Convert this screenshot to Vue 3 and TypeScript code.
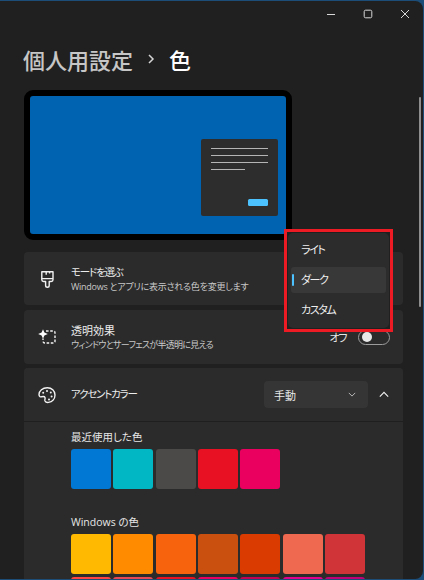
<script setup lang="ts">
const recent: string[] = ['#0078d4', '#00b7c3', '#4c4a48', '#e81123', '#ea005e']
const windowsColors: string[] = [
  '#ffb900', '#ff8c00', '#f7630c', '#ca5010', '#da3b01', '#ef6950', '#d13438',
  '#ff4343', '#e74856', '#e81123', '#ea005e', '#c30052', '#e3008c', '#bf0077',
]
const modes: { label: string; active: boolean }[] = [
  { label: 'ライト', active: false },
  { label: 'ダーク', active: true },
  { label: 'カスタム', active: false },
]
</script>

<template>
  <div class="screen">
    <div class="window">
      <header class="titlebar">
        <svg class="ctl ctl-min" viewBox="0 0 10 10" width="10" height="10"><path d="M1 5.5H9" /></svg>
        <svg class="ctl ctl-max" viewBox="0 0 10 10" width="10" height="10"><rect x="1.2" y="1.2" width="7.6" height="7.6" rx="1.4" /></svg>
        <svg class="ctl ctl-close" viewBox="0 0 10 10" width="10" height="10"><path d="M1 1L9 9M9 1L1 9" /></svg>
      </header>

      <main class="content">
        <h1 class="heading">
          <span class="crumb">個人用設定</span>
          <svg class="crumb-sep" viewBox="0 0 8 10" width="8" height="10"><path d="M2 1L6 5L2 9" /></svg>
          <span class="current">色</span>
        </h1>

        <div class="preview">
          <div class="mini">
            <span class="mini-line"></span>
            <span class="mini-line"></span>
            <span class="mini-line"></span>
            <span class="mini-line short"></span>
            <span class="mini-btn"></span>
          </div>
        </div>

        <section class="card">
          <svg class="icon" viewBox="0 0 20 20" width="20" height="20">
            <path d="M4.8 2.8H16V10.8C16 11.8 15.2 12.5 14.2 12.5H12.2V16.4C12.2 17.5 11.4 18.2 10.4 18.2C9.4 18.2 8.6 17.5 8.6 16.4V12.5H6.6C5.6 12.5 4.8 11.8 4.8 10.8Z" />
            <path d="M4.8 9.6H16M9.2 2.8V5.8M12.6 2.8V4.6" />
          </svg>
          <div class="texts">
            <div class="title tight">モードを選ぶ</div>
            <div class="sub sub-a">Windows とアプリに表示される色を変更します</div>
          </div>
        </section>

        <section class="card card-tall">
          <svg class="icon" viewBox="0 0 20 20" width="20" height="20">
            <path class="dash" d="M9 4H16.2C17.3 4 18 4.7 18 5.8V14.2C18 15.3 17.3 16 16.2 16H7.8C6.7 16 6 15.3 6 14.2V11.5" />
            <path class="solid" d="M6 2.2L7.4 5.6L10.8 7L7.4 8.4L6 11.8L4.6 8.4L1.2 7L4.6 5.6Z" />
          </svg>
          <div class="texts">
            <div class="title">透明効果</div>
            <div class="sub sub-b">ウィンドウとサーフェスが半透明に見える</div>
          </div>
          <div class="toggle-wrap">
            <span class="toggle-label">オフ</span>
            <span class="toggle"><span class="knob"></span></span>
          </div>
        </section>

        <section class="panel">
          <div class="panel-head">
            <svg class="icon" viewBox="0 0 20 20" width="20" height="20">
              <path d="M10.3 2.8C5.6 2.8 2 5.8 2 9.6C2 11.4 3.2 12.2 4.7 11.8C6.2 11.4 7.5 11.4 8 12.5C8.5 13.7 7.4 14.7 8 16C8.6 17.2 10 17.6 11.5 17.4C15.3 16.9 18 14 18 10.1C18 5.8 14.7 2.8 10.3 2.8Z" />
              <circle class="dot" cx="6.2" cy="7.8" r="1" />
              <circle class="dot" cx="10" cy="5.9" r="1" />
              <circle class="dot" cx="13.8" cy="7.6" r="1" />
              <circle class="dot" cx="14.6" cy="11.4" r="1" />
              <circle class="dot" cx="12" cy="14.4" r="1" />
            </svg>
            <div class="title tight texts">アクセントカラー</div>
            <div class="select">
              <span>手動</span>
              <svg class="select-chev" viewBox="0 0 10 6" width="8" height="5"><path d="M1 1L5 5L9 1" /></svg>
            </div>
            <svg class="collapse" viewBox="0 0 12 8" width="10" height="7"><path d="M1 6.5L6 1.5L11 6.5" /></svg>
          </div>
          <div class="panel-body">
            <div class="label">最近使用した色</div>
            <div class="swatches">
              <span v-for="c in recent" :key="c" class="swatch" :style="{ background: c }"></span>
            </div>
            <div class="label second">Windows の色</div>
            <div class="swatches">
              <span v-for="c in windowsColors" :key="c" class="swatch" :style="{ background: c }"></span>
            </div>
          </div>
        </section>
      </main>

      <div class="scrollbar"></div>
    </div>

    <div class="highlight">
      <ul class="menu">
        <li v-for="m in modes" :key="m.label" class="menu-item" :class="{ active: m.active }">{{ m.label }}</li>
      </ul>
    </div>
  </div>
</template>

<style scoped>
.screen {
  position: relative;
  width: 424px;
  height: 580px;
  box-sizing: border-box;
  padding: 1px 1px 1px 0;
  background: #1b4d78;
  overflow: hidden;
  font-family: "Open Sans", "Noto Sans CJK JP", sans-serif;
  font-feature-settings: "palt";
  color: #f2f2f2;
}
.window {
  position: relative;
  height: 100%;
  display: flex;
  flex-direction: column;
  background: #202020;
  border-radius: 0 8px 8px 0;
  overflow: hidden;
}
.titlebar {
  flex: none;
  height: 26px;
  display: flex;
  align-items: center;
  justify-content: flex-end;
  padding-right: 13px;
  gap: 27px;
}
.ctl { fill: none; stroke: #d8d8d8; stroke-width: 1; }
.content {
  flex: 1;
  min-height: 0;
  display: flex;
  flex-direction: column;
  padding: 17px 20px 0 24px;
}
.heading {
  flex: none;
  margin: 0 0 16px -1px;
  height: 30px;
  display: flex;
  align-items: center;
  font-size: 22px;
  font-weight: 500;
  font-feature-settings: normal;
}
.crumb { color: #c6c6c6; width: 111px; }
.crumb-sep { margin-left: 13px; fill: none; stroke: #d4d4d4; stroke-width: 1.5; }
.current { margin-left: 14px; color: #fff; }
.preview {
  flex: none;
  box-sizing: border-box;
  width: 268px;
  height: 150px;
  border: 6px solid #000;
  border-radius: 9px;
  background: #0063b1;
  display: flex;
  justify-content: flex-end;
  align-items: flex-end;
  padding: 0 8px 18px 0;
  margin-bottom: 12px;
}
.mini {
  position: relative;
  box-sizing: border-box;
  width: 77px;
  height: 77px;
  border-radius: 2px;
  background: #2d2d2d;
  padding: 9px 10px;
  display: flex;
  flex-direction: column;
  gap: 6px;
}
.mini-line { height: 1px; background: #b5b5b5; }
.mini-line.short { width: 34px; }
.mini-btn {
  margin-top: auto;
  margin-bottom: 1px;
  align-self: flex-end;
  width: 20px;
  height: 7px;
  border-radius: 1.5px;
  background: #4cc2ff;
}
.card, .panel-head {
  flex: none;
  display: flex;
  align-items: center;
  background: #2b2b2b;
  padding: 0 13px 0 15px;
}
.card {
  height: 53px;
  margin-bottom: 5px;
  border-radius: 4px;
}
.card-tall {
  height: 54px;
  margin-bottom: 4px;
}
.icon {
  flex: none;
  margin-right: 14px;
  margin-left: -2px;
  fill: none;
  stroke: #f2f2f2;
  stroke-width: 1.4;
  stroke-linejoin: round;
}
.icon .dash { stroke-dasharray: 2.6 1.6; }
.icon .solid { fill: #fff; stroke: none; }
.icon .dot { fill: #f2f2f2; stroke: none; }
.texts { flex: 1; min-width: 0; }
.title { font-size: 11px; line-height: 15px; color: #ececec; }
.title.tight { font-size: 10.5px; letter-spacing: -1.2px; }
.sub { font-size: 9px; line-height: 13px; color: #c8c8c8; white-space: nowrap; }
.sub-a { letter-spacing: -0.25px; }
.sub-b { letter-spacing: -0.7px; }
.toggle-wrap { display: flex; align-items: center; }
.toggle-label { font-size: 11px; letter-spacing: -1.4px; margin-right: 12px; color: #e6e6e6; }
.toggle {
  box-sizing: border-box;
  width: 32px;
  height: 15px;
  border: 1px solid #9c9c9c;
  border-radius: 8px;
  display: flex;
  align-items: center;
  padding-left: 3px;
}
.knob { width: 10px; height: 10px; border-radius: 50%; background: #e8e8e8; }
.panel {
  flex: 1;
  min-height: 0;
  background: #2b2b2b;
  border-radius: 4px 4px 0 0;
  overflow: hidden;
}
.panel-head {
  height: 54px;
  box-sizing: border-box;
  border-bottom: 1px solid #1f1f1f;
  padding-right: 14px;
}
.select {
  flex: none;
  box-sizing: border-box;
  width: 104px;
  height: 27px;
  border-radius: 4px;
  background: #353535;
  display: flex;
  align-items: center;
  justify-content: space-between;
  padding: 0 12px 0 10px;
  font-size: 11px;
  color: #e6e6e6;
}
.select-chev { fill: none; stroke: #bbb; stroke-width: 1.2; }
.collapse {
  flex: none;
  margin-left: 11px;
  fill: none;
  stroke: #eee;
  stroke-width: 1.4;
}
.panel-body { padding: 8px 0 0 47px; }
.label { height: 15px; line-height: 15px; font-size: 10.5px; color: #e6e6e6; margin-bottom: 4px; }
.label.second { margin-top: 26px; }
.swatches {
  display: grid;
  grid-template-columns: repeat(7, 40px);
  column-gap: 2.33px;
  row-gap: 3px;
}
.swatch { height: 40px; border-radius: 3px; }
.scrollbar {
  position: absolute;
  right: 2px;
  top: 96px;
  width: 2px;
  height: 210px;
  border-radius: 1px;
  background: #8e8e8e;
}
.highlight {
  position: absolute;
  left: 284px;
  top: 229px;
  box-sizing: border-box;
  width: 109px;
  height: 103px;
  border: 3px solid #ed1c24;
  background: #202020;
  padding: 1px;
}
.menu {
  list-style: none;
  margin: 0;
  height: 100%;
  box-sizing: border-box;
  border-radius: 5px;
  background: #2c2c2c;
  padding: 3px 3px 5px;
  display: flex;
  flex-direction: column;
  justify-content: center;
  gap: 4px;
}
.menu-item {
  position: relative;
  height: 26px;
  line-height: 26px;
  padding-left: 10px;
  border-radius: 3px;
  font-size: 11px;
  letter-spacing: -1.4px;
  color: #eeeeee;
}
.menu-item.active { background: #383838; }
.menu-item.active::before {
  content: "";
  position: absolute;
  left: 1px;
  top: 7px;
  width: 2px;
  height: 12px;
  border-radius: 1px;
  background: #4cc2ff;
}
</style>

<style>
html, body { margin: 0; background: #1b4d78; }
</style>
